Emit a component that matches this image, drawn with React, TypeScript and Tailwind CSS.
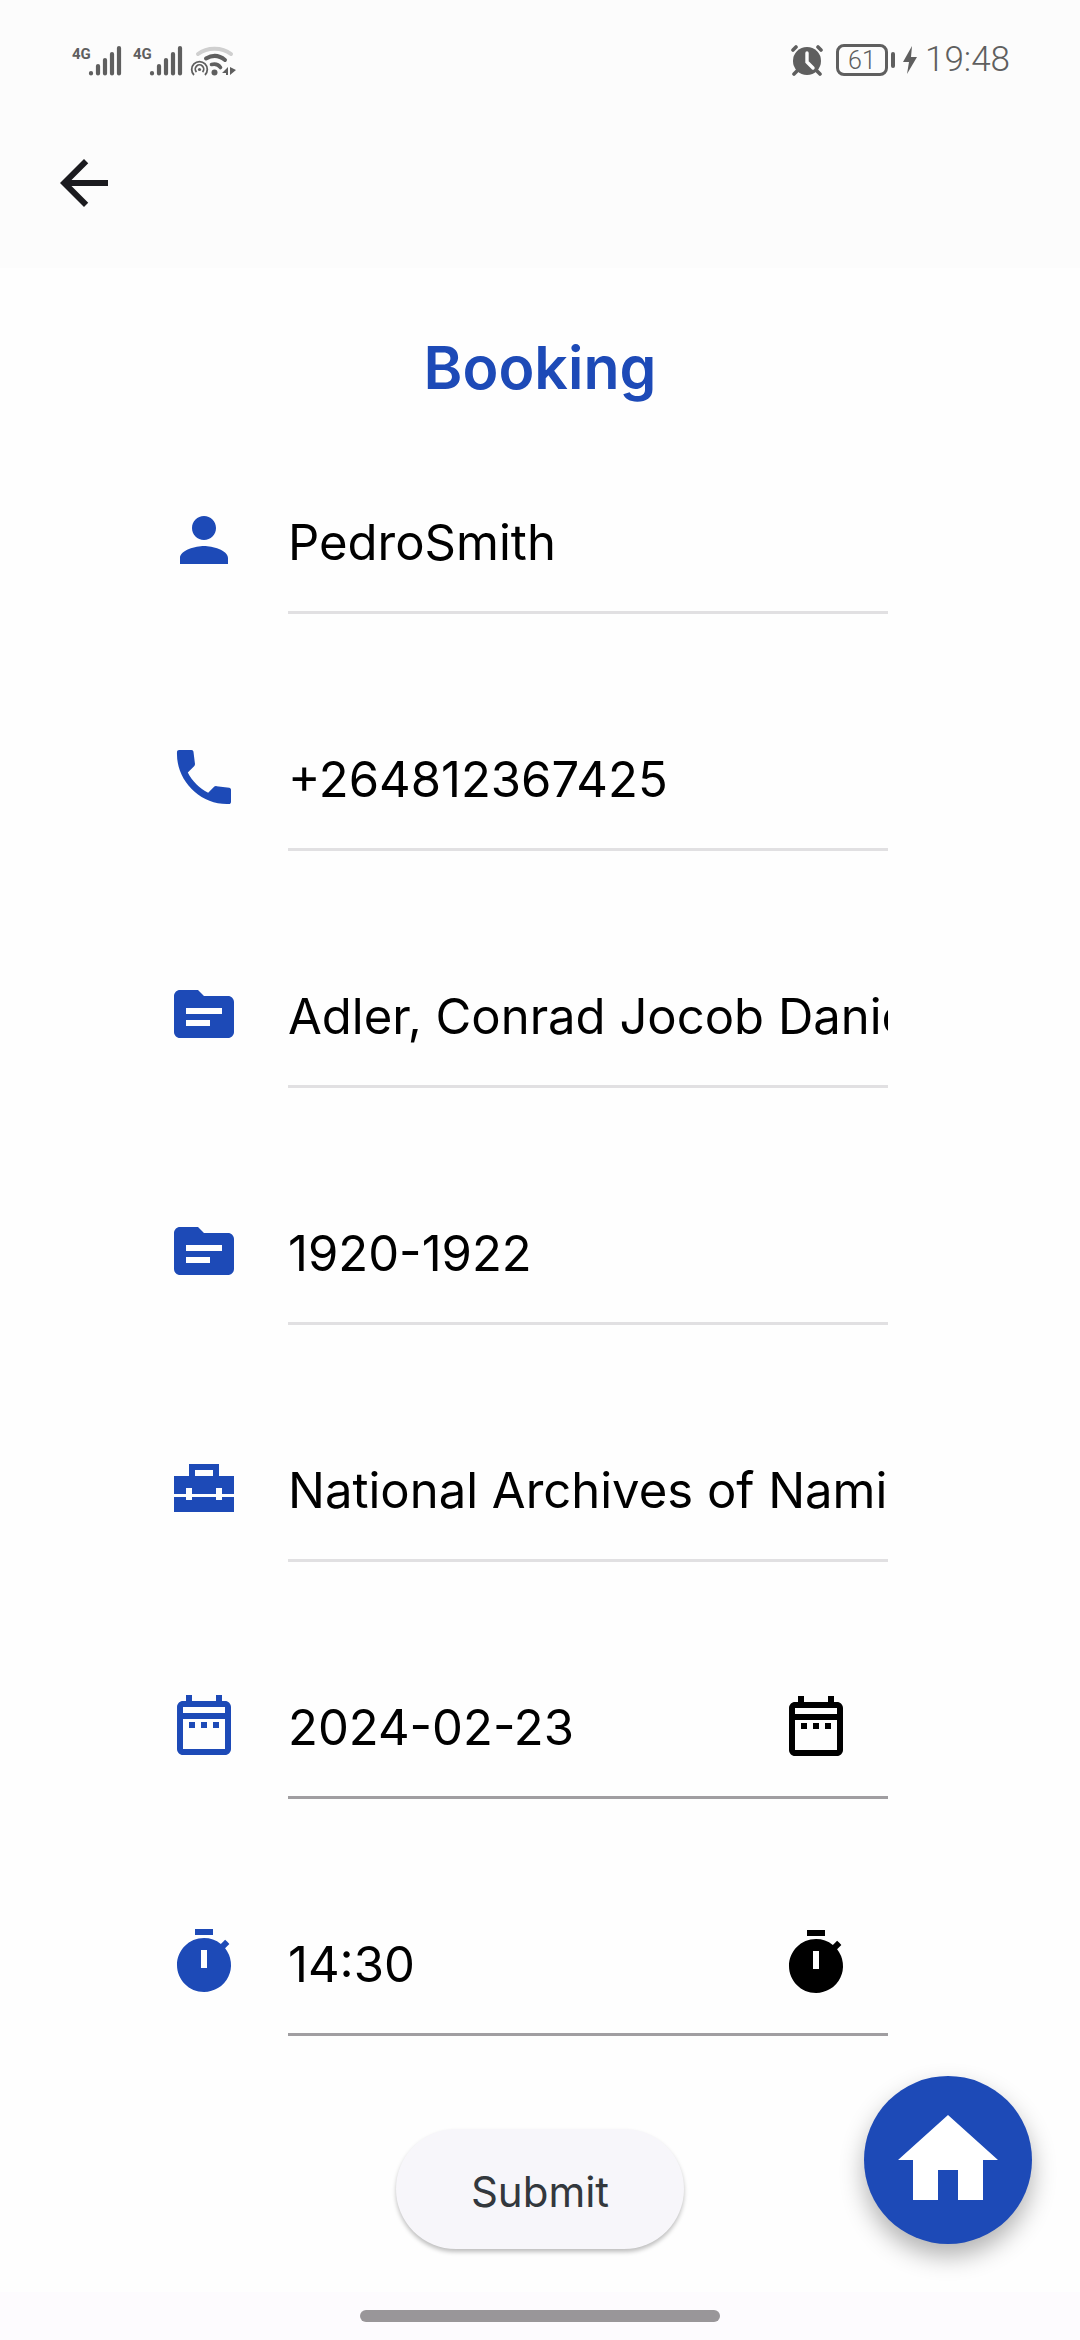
import { useState } from "react";

const paths = {
  back: "M20 11H7.83l5.59-5.59L12 4l-8 8 8 8 1.41-1.41L7.83 13H20v-2z",
  person: "M12 12c2.21 0 4-1.79 4-4s-1.79-4-4-4-4 1.79-4 4 1.79 4 4 4zm0 2c-2.67 0-8 1.34-8 4v2h16v-2c0-2.66-5.33-4-8-4z",
  call: "M20.3 21C10.8 21.4 2.6 13.2 3 3.7c0-.4.3-.7.7-.7h4.1c.4 0 .7.3.7.7L9 7.7c0 .3-.1.5-.3.7L6.6 10.5c1.44 2.84 3.95 5.35 6.79 6.79L15.2 15.4c.3-.3.6-.4 1-.35l4.2.5c.35.05.6.35.6.7v4.05c0 .4-.3.7-.7.7z",
  source:
    "M20 6h-8l-2-2H4c-1.1 0-2 .9-2 2v12c0 1.1.9 2 2 2h16c1.1 0 2-.9 2-2V8c0-1.1-.9-2-2-2zm-6 10H6v-2h8v2zm4-4H6v-2h12v2z",
  toolbox: "M18 16h-2v-1H8v1H6v-1H2v5h20v-5h-4v1zM17 8V4H7v4H2v6h4v-2h2v2h8v-2h2v2h4V8h-5zM9 6h6v2H9V6z",
  calendar:
    "M7 11h2v2H7v-2zm14-5v14c0 1.1-.89 2-2 2H5c-1.11 0-2-.9-2-2l.01-14c0-1.1.88-2 1.99-2h1V2h2v2h8V2h2v2h1c1.1 0 2 .9 2 2zM5 8h14V6H5v2zm14 12V10H5v10h14zm-4-7h2v-2h-2v2zm-4 0h2v-2h-2v2z",
  timer:
    "M9 1h6v2H9zm10.03 6.39 1.42-1.42c-.43-.51-.9-.99-1.41-1.41l-1.42 1.42A8.962 8.962 0 0 0 12 4c-4.97 0-9 4.03-9 9s4.02 9 9 9a8.994 8.994 0 0 0 7.03-14.61zM13 14h-2V8h2v6z",
  home: "M10 20v-6h4v6h5v-8h3L12 3 2 12h3v8z",
};

type IconName = keyof typeof paths;

function Icon({ name, className }: { name: IconName; className: string }) {
  return (
    <svg viewBox="0 0 24 24" fill="currentColor" aria-hidden="true" className={className}>
      <path d={paths[name]} />
    </svg>
  );
}

function Signal() {
  return (
    <div className="flex items-start">
      <span className="w-4 text-[15px] leading-5 font-bold">4G</span>
      <svg viewBox="0 0 34 32" className="h-8 w-[34px]" fill="none" stroke="currentColor" strokeWidth="4.2" strokeLinecap="round">
        <path d="M3 29v.5M10 22v7.5M17 16v13.5M24 10v19.5M31 4v25.5" />
      </svg>
    </div>
  );
}

function Wifi() {
  return (
    <svg viewBox="0 0 46 32" className="h-8 w-[46px]" fill="none" stroke="currentColor">
      <path d="M8 10C17 3 32 3 41 10" stroke="#cfcfcf" strokeWidth="4" strokeLinecap="round" />
      <path d="M16 14.5C22 11 29 11 35 16" strokeWidth="4" strokeLinecap="round" />
      <path d="M21.5 20.5c4-1 7 0 9 3" strokeWidth="3.6" strokeLinecap="round" />
      <circle cx="24.5" cy="28.5" r="3" fill="currentColor" stroke="none" />
      <path d="M4 31a7.8 7.8 0 1 1 11 0M6.500 28a4.200 4.200 0 1 1 6 0" strokeWidth="1.8" />
      <circle cx="9.500" cy="25.500" r="1.6" fill="currentColor" stroke="none" />
      <path d="M38 23v8h-2v-2h-4zM40 23v8l6-5z" fill="currentColor" stroke="none" />
    </svg>
  );
}

function StatusBar() {
  return (
    <div className="flex h-[120px] items-center justify-between pr-[70px] pl-[72px] text-[#5f5f5f]">
      <div className="flex">
        <div className="flex gap-[11px]">
          <Signal />
          <Signal />
        </div>
        <div className="ml-[7px]">
          <Wifi />
        </div>
      </div>
      <div className="flex items-center">
        <svg viewBox="0 0 34 32" className="h-8 w-[34px]" role="img" aria-label="Alarm set">
          <circle cx="17" cy="17" r="14" fill="currentColor" />
          <path d="M3 6l3-3M31 6l-3-3M7 27l-3 3M27 27l3 3" stroke="currentColor" strokeWidth="3.6" strokeLinecap="round" />
          <path d="M17 9v9l6 6" fill="none" stroke="#fdfdfd" strokeWidth="3.4" strokeLinecap="round" />
        </svg>
        <div className="ml-3 flex h-8 w-[52px] items-center justify-center rounded-lg border-3 border-current text-[25px] leading-none font-light">
          61
        </div>
        <div className="ml-[3px] h-4 w-1 rounded-sm bg-current" />
        <svg viewBox="0 0 14 28" className="ml-2 h-7 w-[14px]" fill="currentColor" aria-hidden="true">
          <path d="M9 0L0 16h6L4 28l10-17H8z" />
        </svg>
        <time className="ml-2 text-[35px] leading-10 font-light">19:48</time>
      </div>
    </div>
  );
}

type FieldProps = { id: string; label: string; icon: IconName; initial: string; picker?: boolean };

function Field({ id, label, icon, initial, picker }: FieldProps) {
  const [value, setValue] = useState(initial);
  return (
    <div className="flex gap-12">
      <label htmlFor={id} aria-label={label} className="flex h-[140px] shrink-0 items-center text-[#1d4ab7]">
        <Icon name={icon} className="size-[72px]" />
      </label>
      <div
        className={
          picker
            ? "flex h-36 min-w-0 flex-1 items-center border-b-3 border-[#a09ea1]"
            : "flex h-36 min-w-0 flex-1 items-center border-b-3 border-[#e1e0e2]"
        }
      >
        <input
          id={id}
          value={value}
          readOnly={!picker}
          onChange={(e) => setValue(e.target.value)}
          className="h-full w-full min-w-0 bg-transparent pt-1 text-[49px] text-black outline-none"
        />
        {picker && (
          <button type="button" aria-label={"Choose " + label.toLowerCase()} className="mr-9 shrink-0 text-black">
            <Icon name={icon} className="size-[72px]" />
          </button>
        )}
      </div>
    </div>
  );
}

const fields: FieldProps[] = [
  { id: "name", label: "Name", icon: "person", initial: "PedroSmith" },
  { id: "phone", label: "Phone", icon: "call", initial: "+264812367425" },
  { id: "collection", label: "Collection", icon: "source", initial: "Adler, Conrad Jocob Daniel" },
  { id: "period", label: "Period", icon: "source", initial: "1920-1922" },
  { id: "place", label: "Place", icon: "toolbox", initial: "National Archives of Namibia" },
  { id: "date", label: "Date", icon: "calendar", initial: "2024-02-23", picker: true },
  { id: "time", label: "Time", icon: "timer", initial: "14:30", picker: true },
];

export default function App() {
  return (
    <div className="flex min-h-screen flex-col bg-[#fefefe] font-['Inter',sans-serif]">
      <header className="bg-[#fcfcfc] font-['Roboto',sans-serif]">
        <StatusBar />
        <nav className="flex h-[148px] px-12 pt-[27px]">
          <button type="button" aria-label="Back" className="size-[72px] text-[#1b1b1f]">
            <Icon name="back" className="size-[72px]" />
          </button>
        </nav>
      </header>
      <main className="flex flex-1 flex-col px-[168px] pt-[60px]">
        <h1 className="text-center text-[59px] leading-[80px] font-semibold text-[#1d4ab7]">Booking</h1>
        <form className="mt-[62px] flex flex-col gap-[93px] pr-6" onSubmit={(e) => e.preventDefault()}>
          {fields.map((field) => (
            <Field key={field.id} {...field} />
          ))}
          <button
            type="submit"
            className="-mr-6 h-[120px] w-72 self-center rounded-full bg-[#f7f6fa] pt-1 text-[42px] text-[#33383d] shadow-[0_3px_4px_rgba(0,0,0,0.25)]"
          >
            Submit
          </button>
        </form>
      </main>
      <footer className="flex h-12 justify-center bg-[#fdfbfe] pt-[18px]">
        <div className="h-3 w-[360px] rounded-full bg-[#999699]" />
      </footer>
      <button
        type="button"
        aria-label="Home"
        className="fixed right-12 bottom-24 flex size-[168px] items-center justify-center rounded-full bg-[#1d4ab7] text-white shadow-[0_12px_24px_rgba(0,0,0,0.3)]"
      >
        <Icon name="home" className="size-[120px]" />
      </button>
    </div>
  );
}
